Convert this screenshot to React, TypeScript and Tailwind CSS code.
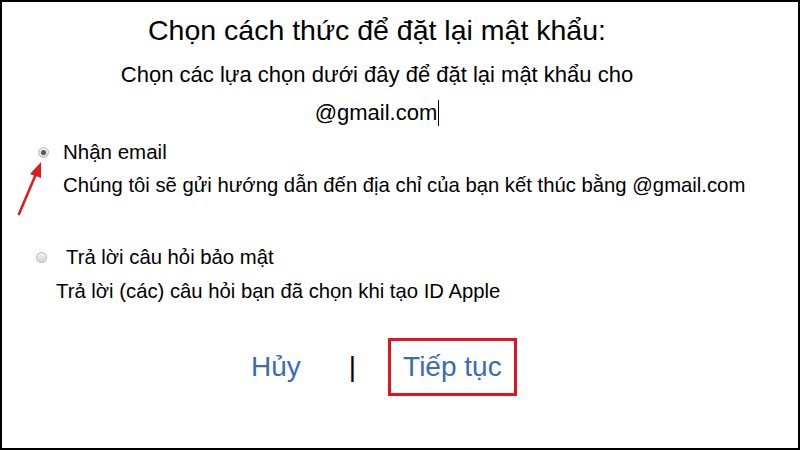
import React from 'react';

const Radio: React.FC<{ checked?: boolean }> = ({ checked }) => (
    <span className="w-[11px] h-[11px] rounded-full border border-[#b8b8b8] bg-gradient-to-b from-[#f4f4f4] to-[#d4d4d4] flex items-center justify-center shrink-0">
        {checked && <span className="w-[5px] h-[5px] rounded-full bg-[#555]" />}
    </span>
);

const App: React.FC = () => {
    return (
        <div className="w-[800px] h-[450px] bg-white border-2 border-black relative text-black font-['Liberation_Sans',Arial,sans-serif] overflow-hidden">
            <div className="flex flex-col items-center pt-[8px] pr-[46px]">
                <h1 className="text-[28.5px] leading-[40px]">Chọn cách thức để đặt lại mật khẩu:</h1>
                <p className="text-[22px] leading-[38px] mt-[6px]">Chọn các lựa chọn dưới đây để đặt lại mật khẩu cho</p>
                <p className="text-[22px] leading-[38px] flex items-center">
                    @gmail.com<span className="w-px h-[26px] bg-black ml-px" />
                </p>
            </div>

            <div className="mt-[5px] pl-[36px]">
                <div className="flex items-center gap-[14px]">
                    <Radio checked />
                    <span className="text-[20.5px] leading-[30px]">Nhận email</span>
                </div>
                <p className="text-[20.3px] leading-[36px] pl-[25px]">
                    Chúng tôi sẽ gửi hướng dẫn đến địa chỉ của bạn kết thúc bằng @gmail.com
                </p>

                <div className="flex items-center gap-[19px] mt-[39px] -ml-[2px]">
                    <Radio />
                    <span className="text-[20.3px] leading-[30px]">Trả lời câu hỏi bảo mật</span>
                </div>
                <p className="text-[20.3px] leading-[38px] pl-[18px]">
                    Trả lời (các) câu hỏi bạn đã chọn khi tạo ID Apple
                </p>
            </div>

            <div className="flex items-center mt-[28px] pl-[249px] text-[28px]">
                <span className="text-[#3b6bb6]">Hủy</span>
                <span className="ml-[48px] text-black">|</span>
                <span className="ml-[32px] border-[3px] border-[#e3141c] px-[12px] py-[10px] text-[#3b6bb6] leading-[32px]">
                    Tiếp tục
                </span>
            </div>

            <svg className="absolute left-[10px] top-[136px]" width="40" height="80" viewBox="0 0 40 80">
                <line x1="7" y1="76" x2="24" y2="36" stroke="#e01b1b" strokeWidth="2.5" strokeLinecap="round" />
                <polygon points="29,24 18,36 29,40" fill="#e01b1b" />
            </svg>
        </div>
    );
};

export default App;
